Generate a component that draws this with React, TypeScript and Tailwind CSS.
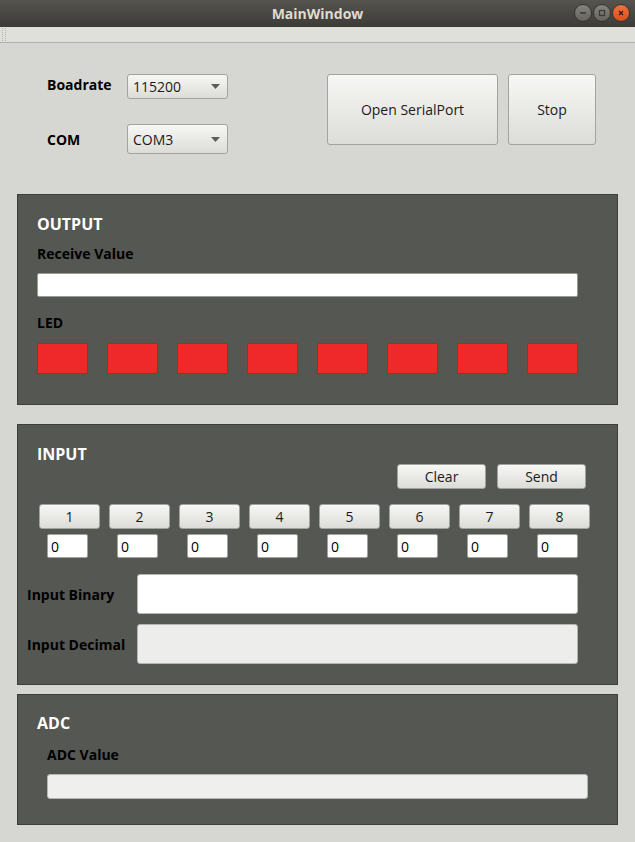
import React from 'react';

const font = { fontFamily: '"Open Sans", "Noto Sans", sans-serif' };

const face = 'rounded-[3px] border border-[#a3a39e] bg-gradient-to-b from-[#f7f7f5] to-[#dcdcd8] text-[14px] text-[#1b1b1b]';
const btn = `${face} flex items-center justify-center`;

function Combo({ value, h }: { value: string; h: string }) {
  return (
    <div className={`${face} ${h} w-[101px] flex items-center justify-between pl-[5px] pr-[7px]`}>
      <span>{value}</span>
      <svg width="9" height="5" viewBox="0 0 9 5">
        <path d="M0 0h9L4.5 5z" fill="#5c5c5a" />
      </svg>
    </div>
  );
}

function WinBtn({ kind }: { kind: 'min' | 'max' | 'close' }) {
  const bg = kind === 'close' ? 'bg-gradient-to-b from-[#f0703f] to-[#d9501d]' : 'bg-gradient-to-b from-[#85847e] to-[#64635e]';
  return (
    <div className={`w-[18px] h-[18px] rounded-full ${bg} border border-[#35342f] flex items-center justify-center`}>
      <svg width="10" height="10" viewBox="0 0 10 10">
        {kind === 'min' && <path d="M2 5h6" stroke="#3a3934" strokeWidth="1.5" />}
        {kind === 'max' && <rect x="2.5" y="2.5" width="5" height="5" fill="none" stroke="#3a3934" strokeWidth="1.2" />}
        {kind === 'close' && <path d="M3 3l4 4M7 3l-4 4" stroke="#3a1a0a" strokeWidth="1.3" />}
      </svg>
    </div>
  );
}

export default function App() {
  const leds = [0, 1, 2, 3, 4, 5, 6, 7];
  const panel = 'mx-[17px] w-[601px] border border-[#3e3f3b] bg-[#555753]';
  const title = 'h-[20px] flex items-center text-[16px] font-bold text-white';
  const label = 'text-[14px] font-bold text-black';

  return (
    <div className="w-[635px] h-[842px] bg-[#d6d7d2] overflow-hidden" style={font}>
      {/* title bar */}
      <div className="relative h-[27px] bg-gradient-to-b from-[#56544f] to-[#3c3b37] flex items-center justify-center">
        <span className="text-[14px] font-bold text-[#dfdbd2]">MainWindow</span>
        <div className="absolute right-[5px] top-[4px] flex gap-[1px]">
          <WinBtn kind="min" />
          <WinBtn kind="max" />
          <WinBtn kind="close" />
        </div>
      </div>
      {/* toolbar strip */}
      <div className="h-[16px] bg-[#dfe0da] border-b border-[#aeafa9] flex items-center pl-[2px]">
        <div className="w-[4px] h-[13px] border-l border-r border-dotted border-[#b4b5af]" />
      </div>

      {/* serial settings */}
      <div className="flex pt-[31px] h-[151px]">
        <div className="flex flex-col pl-[47px]">
          <div className="flex items-center h-[24px]">
            <span className={`${label} w-[80px] -mt-[4px]`}>Boadrate</span>
            <Combo value="115200" h="h-[25px]" />
          </div>
          <div className="flex items-center h-[30px] mt-[26px]">
            <span className={`${label} w-[80px]`}>COM</span>
            <Combo value="COM3" h="h-[30px]" />
          </div>
        </div>
        <div className="flex ml-[99px] gap-[10px]">
          <div className={`${btn} w-[171px] h-[71px]`}>Open SerialPort</div>
          <div className={`${btn} w-[88px] h-[71px]`}>Stop</div>
        </div>
      </div>

      {/* OUTPUT */}
      <div className={`${panel} h-[211px] pl-[19px] pt-[19px]`}>
        <div className={title}>OUTPUT</div>
        <div className={`${label} h-[18px] mt-[10px] flex items-center`}>Receive Value</div>
        <div className="mt-[11px] w-[541px] h-[24px] bg-white border border-[#9a9b96] rounded-[2px]" />
        <div className={`${label} h-[18px] mt-[16px] flex items-center`}>LED</div>
        <div className="mt-[12px] flex gap-[19px]">
          {leds.map((i) => (
            <div key={i} className="w-[51px] h-[31px] bg-[#ef2929] border border-[#c41d1d]" />
          ))}
        </div>
      </div>

      {/* INPUT */}
      <div className={`${panel} h-[261px] mt-[19px] pt-[19px]`}>
        <div className={`${title} pl-[19px]`}>INPUT</div>
        <div className="flex justify-end gap-[11px] pr-[31px]">
          <div className={`${btn} w-[89px] h-[25px]`}>Clear</div>
          <div className={`${btn} w-[89px] h-[25px]`}>Send</div>
        </div>
        <div className="mt-[15px] pl-[19px] grid grid-cols-[repeat(8,70px)]">
          {leds.map((i) => (
            <div key={i} className="flex flex-col">
              <div className={`${btn} ml-[2px] w-[61px] h-[25px]`}>{i + 1}</div>
              <div className="ml-[10px] mt-[5px] w-[41px] h-[24px] bg-white border border-[#a3a39e] rounded-[2px] flex items-center pl-[3px] text-[14px] text-black">0</div>
            </div>
          ))}
        </div>
        <div className="mt-[16px] pl-[9px] flex items-center">
          <span className={`${label} w-[110px]`}>Input Binary</span>
          <div className="w-[441px] h-[40px] bg-white border border-[#b5b6b1] rounded-[3px]" />
        </div>
        <div className="mt-[10px] pl-[9px] flex items-center">
          <span className={`${label} w-[110px]`}>Input Decimal</span>
          <div className="w-[441px] h-[40px] bg-[#ededeb] border border-[#b5b6b1] rounded-[3px]" />
        </div>
      </div>

      {/* ADC */}
      <div className={`${panel} h-[131px] mt-[9px] pt-[18px] pl-[19px]`}>
        <div className={title}>ADC</div>
        <div className={`${label} h-[18px] mt-[12px] pl-[10px] flex items-center`}>ADC Value</div>
        <div className="mt-[11px] ml-[10px] w-[541px] h-[25px] bg-[#efefed] border border-[#b5b6b1] rounded-[3px]" />
      </div>
    </div>
  );
}
